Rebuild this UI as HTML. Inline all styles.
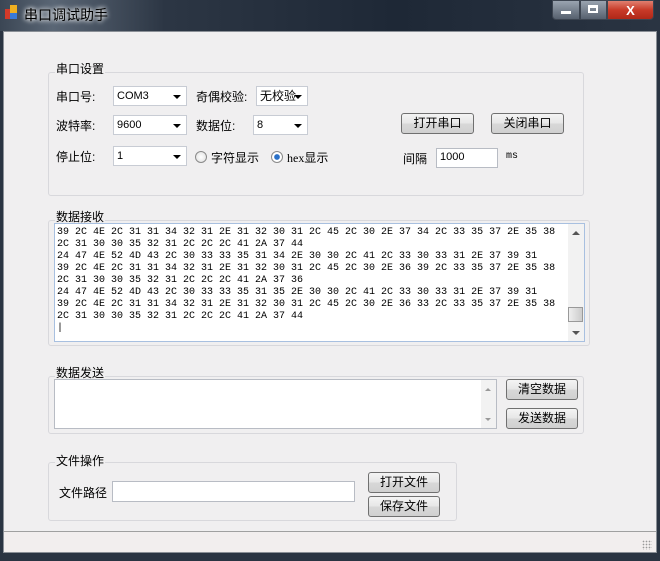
<!DOCTYPE html>
<html><head><meta charset="utf-8"><style>
*{margin:0;padding:0;box-sizing:border-box}
body{width:660px;height:561px;overflow:hidden;background:#2a3442;font-family:"Liberation Sans","Noto Sans CJK SC",sans-serif;font-size:12px;color:#000;position:relative}
.a{position:absolute}
.title{left:0;top:0;width:660px;height:31px;background:linear-gradient(90deg,#3b4654 0%,#5a6675 8%,#2c3644 25%,#1e2836 60%,#2a3442 100%)}
.client{left:3px;top:31px;width:654px;height:522px;background:#f0eff0;border:1px solid #8a8f96}
.grp{border:1px solid #d8d8dc;border-radius:3px}
.lbl{background:#f0eff0;padding:0 1px;line-height:14px}
.cb{background:#fff;border:1px solid #c8ccd4;height:20px;line-height:18px;padding-left:3px;font-size:11px}
.cb::after{content:"";position:absolute;right:5px;top:8px;border-left:4px solid transparent;border-right:4px solid transparent;border-top:4px solid #000}
.btn{border:1px solid #707070;border-radius:3px;background:linear-gradient(#f4f4f4,#e6e6e6 50%,#d8d8d8 51%,#d0d0d0);text-align:center;line-height:18px;font-size:12px}
.tb{background:#fff;border:1px solid #b8bcc4}
.mono{font-family:"Liberation Mono","DejaVu Sans Mono",monospace;font-size:10px;line-height:12px;white-space:pre}
.radio{width:12px;height:12px;border-radius:50%;border:1px solid #8a8a8a;background:radial-gradient(#fff,#ddd)}
</style></head><body>
<div class="a title"></div>
<div class="a" style="left:5px;top:9px;width:6px;height:10px;background:#d23a2a"></div>
<div class="a" style="left:10px;top:5px;width:7px;height:8px;background:#f0b020"></div>
<div class="a" style="left:10px;top:13px;width:7px;height:6px;background:#3a7ad8"></div>
<div class="a" style="left:24px;top:5px;font-size:14px;color:#000;text-shadow:0 0 6px #fff,0 0 4px #fff">串口调试助手</div>
<div class="a" style="left:552px;top:0;width:28px;height:20px;background:linear-gradient(#9aa4b0,#56606e);border:1px solid #3c4450;border-radius:0 0 0 4px"></div>
<div class="a" style="left:561px;top:11px;width:10px;height:3px;background:#fff"></div>
<div class="a" style="left:580px;top:0;width:27px;height:20px;background:linear-gradient(#9aa4b0,#56606e);border:1px solid #3c4450"></div>
<div class="a" style="left:588px;top:5px;width:10px;height:8px;border:2px solid #fff;border-top-width:3px"></div>
<div class="a" style="left:607px;top:0;width:47px;height:20px;background:linear-gradient(#e08070,#c83a28 50%,#b02818);border:1px solid #3c4450;border-radius:0 0 4px 0;color:#fff;font-weight:bold;text-align:center;line-height:19px;font-size:13px">X</div>
<div class="a client"></div>

<div class="a grp" style="left:48px;top:72px;width:536px;height:124px"></div>
<div class="a lbl" style="left:55px;top:62px">串口设置</div>
<div class="a" style="left:56px;top:88px">串口号:</div>
<div class="a cb" style="left:113px;top:86px;width:74px">COM3</div>
<div class="a" style="left:196px;top:88px">奇偶校验:</div>
<div class="a cb" style="left:256px;top:86px;width:52px;font-size:12px">无校验</div>
<div class="a" style="left:56px;top:117px">波特率:</div>
<div class="a cb" style="left:113px;top:115px;width:74px">9600</div>
<div class="a" style="left:196px;top:117px">数据位:</div>
<div class="a cb" style="left:253px;top:115px;width:55px">8</div>
<div class="a" style="left:56px;top:148px">停止位:</div>
<div class="a cb" style="left:113px;top:146px;width:74px">1</div>
<div class="a radio" style="left:195px;top:151px"></div>
<div class="a" style="left:211px;top:149px">字符显示</div>
<div class="a radio" style="left:271px;top:151px;background:radial-gradient(#2a70c8 35%,#fff 45%)"></div>
<div class="a" style="left:287px;top:149px"><span style="font-family:'Liberation Serif',serif">hex</span>显示</div>
<div class="a btn" style="left:401px;top:113px;width:73px;height:21px">打开串口</div>
<div class="a btn" style="left:491px;top:113px;width:73px;height:21px">关闭串口</div>
<div class="a" style="left:403px;top:150px">间隔</div>
<div class="a tb" style="left:436px;top:148px;width:62px;height:20px;padding:2px 3px;font-size:11px">1000</div>
<div class="a mono" style="left:506px;top:151px">ms</div>

<div class="a grp" style="left:48px;top:220px;width:542px;height:126px"></div>
<div class="a lbl" style="left:55px;top:210px">数据接收</div>
<div class="a tb" style="left:54px;top:223px;width:531px;height:119px;border-color:#a8c0e0"></div>
<div class="a mono" style="left:57px;top:227px">39 2C 4E 2C 31 31 34 32 31 2E 31 32 30 31 2C 45 2C 30 2E 37 34 2C 33 35 37 2E 35 38
2C 31 30 30 35 32 31 2C 2C 2C 41 2A 37 44
24 47 4E 52 4D 43 2C 30 33 33 35 31 34 2E 30 30 2C 41 2C 33 30 33 31 2E 37 39 31
39 2C 4E 2C 31 31 34 32 31 2E 31 32 30 31 2C 45 2C 30 2E 36 39 2C 33 35 37 2E 35 38
2C 31 30 30 35 32 31 2C 2C 2C 41 2A 37 36
24 47 4E 52 4D 43 2C 30 33 33 35 31 35 2E 30 30 2C 41 2C 33 30 33 31 2E 37 39 31
39 2C 4E 2C 31 31 34 32 31 2E 31 32 30 31 2C 45 2C 30 2E 36 33 2C 33 35 37 2E 35 38
2C 31 30 30 35 32 31 2C 2C 2C 41 2A 37 44
|</div>
<div class="a" style="left:568px;top:224px;width:16px;height:117px;background:#f2f2f2"></div>
<div class="a" style="left:572px;top:231px;border-left:4px solid transparent;border-right:4px solid transparent;border-bottom:4px solid #555"></div>
<div class="a" style="left:572px;top:331px;border-left:4px solid transparent;border-right:4px solid transparent;border-top:4px solid #555"></div>
<div class="a" style="left:568px;top:307px;width:15px;height:15px;border:1px solid #999;background:linear-gradient(90deg,#eee,#ccc)"></div>

<div class="a grp" style="left:48px;top:376px;width:536px;height:58px"></div>
<div class="a lbl" style="left:55px;top:366px">数据发送</div>
<div class="a tb" style="left:54px;top:379px;width:443px;height:50px"></div>
<div class="a" style="left:481px;top:380px;width:15px;height:48px;background:#f2f2f2"></div>
<div class="a" style="left:485px;top:388px;border-left:3px solid transparent;border-right:3px solid transparent;border-bottom:3px solid #999"></div>
<div class="a" style="left:485px;top:418px;border-left:3px solid transparent;border-right:3px solid transparent;border-top:3px solid #999"></div>
<div class="a btn" style="left:506px;top:379px;width:72px;height:21px">清空数据</div>
<div class="a btn" style="left:506px;top:408px;width:72px;height:21px">发送数据</div>

<div class="a grp" style="left:48px;top:462px;width:409px;height:59px"></div>
<div class="a lbl" style="left:55px;top:454px">文件操作</div>
<div class="a" style="left:59px;top:484px">文件路径</div>
<div class="a tb" style="left:112px;top:481px;width:243px;height:21px"></div>
<div class="a btn" style="left:368px;top:472px;width:72px;height:21px">打开文件</div>
<div class="a btn" style="left:368px;top:496px;width:72px;height:21px">保存文件</div>

<div class="a" style="left:4px;top:531px;width:652px;height:1px;background:#a0a0a0"></div>
<div class="a" style="left:4px;top:532px;width:652px;height:20px;background:#f2eeee"></div>
<div class="a" style="left:642px;top:540px;width:10px;height:10px;background:radial-gradient(circle,#999 35%,transparent 40%) 0 0/3px 3px"></div>
</body></html>
